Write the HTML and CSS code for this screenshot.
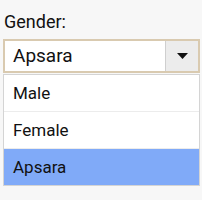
FILE: index.html
```html
<!DOCTYPE html>
<html lang="en">

<head>
    <meta charset="UTF-8">
    <title>Gender</title>
    <link rel="stylesheet" href="styles.css">
</head>

<body>
    <div class="field">
        <label class="field-label">Gender:</label>
        <div class="select">
            <span class="select-value">Apsara</span>
            <span class="select-arrow">
                <svg width="11" height="6" viewBox="0 0 11 6"><path d="M0 0 L11 0 L5.5 6 Z" fill="#111"/></svg>
            </span>
        </div>
        <ul class="options">
            <li>Male</li>
            <li>Female</li>
            <li class="selected">Apsara</li>
        </ul>
    </div>
</body>

</html>
```

FILE: styles.css
```css
body {
    margin: 0;
    background-color: #f7f7f7;
    font-family: Roboto, 'Noto Sans', sans-serif;
    color: #111;
}

.field {
    padding: 10px 2px 0 3px;
}

.field-label {
    display: block;
    font-size: 18px;
    line-height: 23px;
    padding-left: 1px;
    margin-bottom: 6px;
}

.select {
    display: flex;
    height: 30px;
    border: 2px solid #d9cab0;
    background-color: #fff;
}

.select-value {
    flex: 1;
    font-size: 19px;
    line-height: 30px;
    padding-left: 8px;
}

.select-arrow {
    width: 32px;
    display: flex;
    align-items: center;
    justify-content: center;
    background-color: #ececec;
    border-left: 1px solid #cfcfcf;
}

.options {
    list-style: none;
    margin: 1px 0 0;
    padding: 0;
    background-color: #fff;
    border: 1px solid #d4d4d4;
}

.options li {
    height: 36px;
    line-height: 36px;
    font-size: 17px;
    padding-left: 9px;
}

.options li + li {
    border-top: 1px solid #ececec;
}

.options .selected {
    background-color: #80aaf8;
}
```
